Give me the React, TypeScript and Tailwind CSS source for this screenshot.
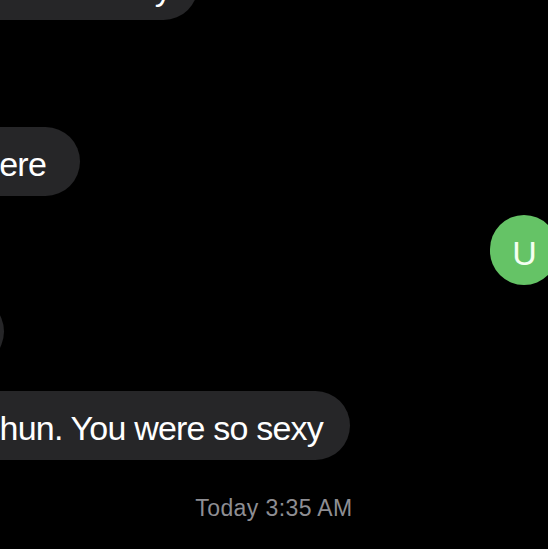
export default function App() {
  const bubble =
    "h-[69px] shrink-0 whitespace-nowrap rounded-[35px] flex items-center pt-[5px] text-[34px] leading-none tracking-[-0.8px] text-white bg-[#262628]";
  return (
    <div className="w-[548px] h-[549px] overflow-hidden bg-black flex flex-col font-['Liberation_Sans',Arial,sans-serif]">
      <div className="-mt-[49px] w-[198px] flex justify-end">
        <div className={`${bubble} pl-[27px] pr-[27px]`}>more than words can say</div>
      </div>
      <div className="mt-[107px] w-[80px] flex justify-end">
        <div className={`${bubble} pl-[27px] pr-[34px]`}>I'm almost there</div>
      </div>
      <div className="mt-[19px] flex justify-end">
        <div className="h-[70px] shrink-0 -mr-[10px] whitespace-nowrap rounded-[35px] flex items-center pt-[5px] pl-[22px] pr-[22px] text-[34px] leading-none tracking-[-0.8px] text-[#f4fff2] bg-[#65c366]">
          U
        </div>
      </div>
      <div className="mt-[12px] w-[4px] flex justify-end">
        <div className={`${bubble} pl-[27px] pr-[27px]`}>Okay</div>
      </div>
      <div className="mt-[25px] w-[350px] flex justify-end">
        <div className={`${bubble} pl-[27px] pr-[27px]`}>Thank you hun. You were so sexy</div>
      </div>
      <div className="mt-[37px] text-center text-[23px] leading-none tracking-[0.4px] text-[#8e8e93]">Today 3:35 AM</div>
    </div>
  );
}
